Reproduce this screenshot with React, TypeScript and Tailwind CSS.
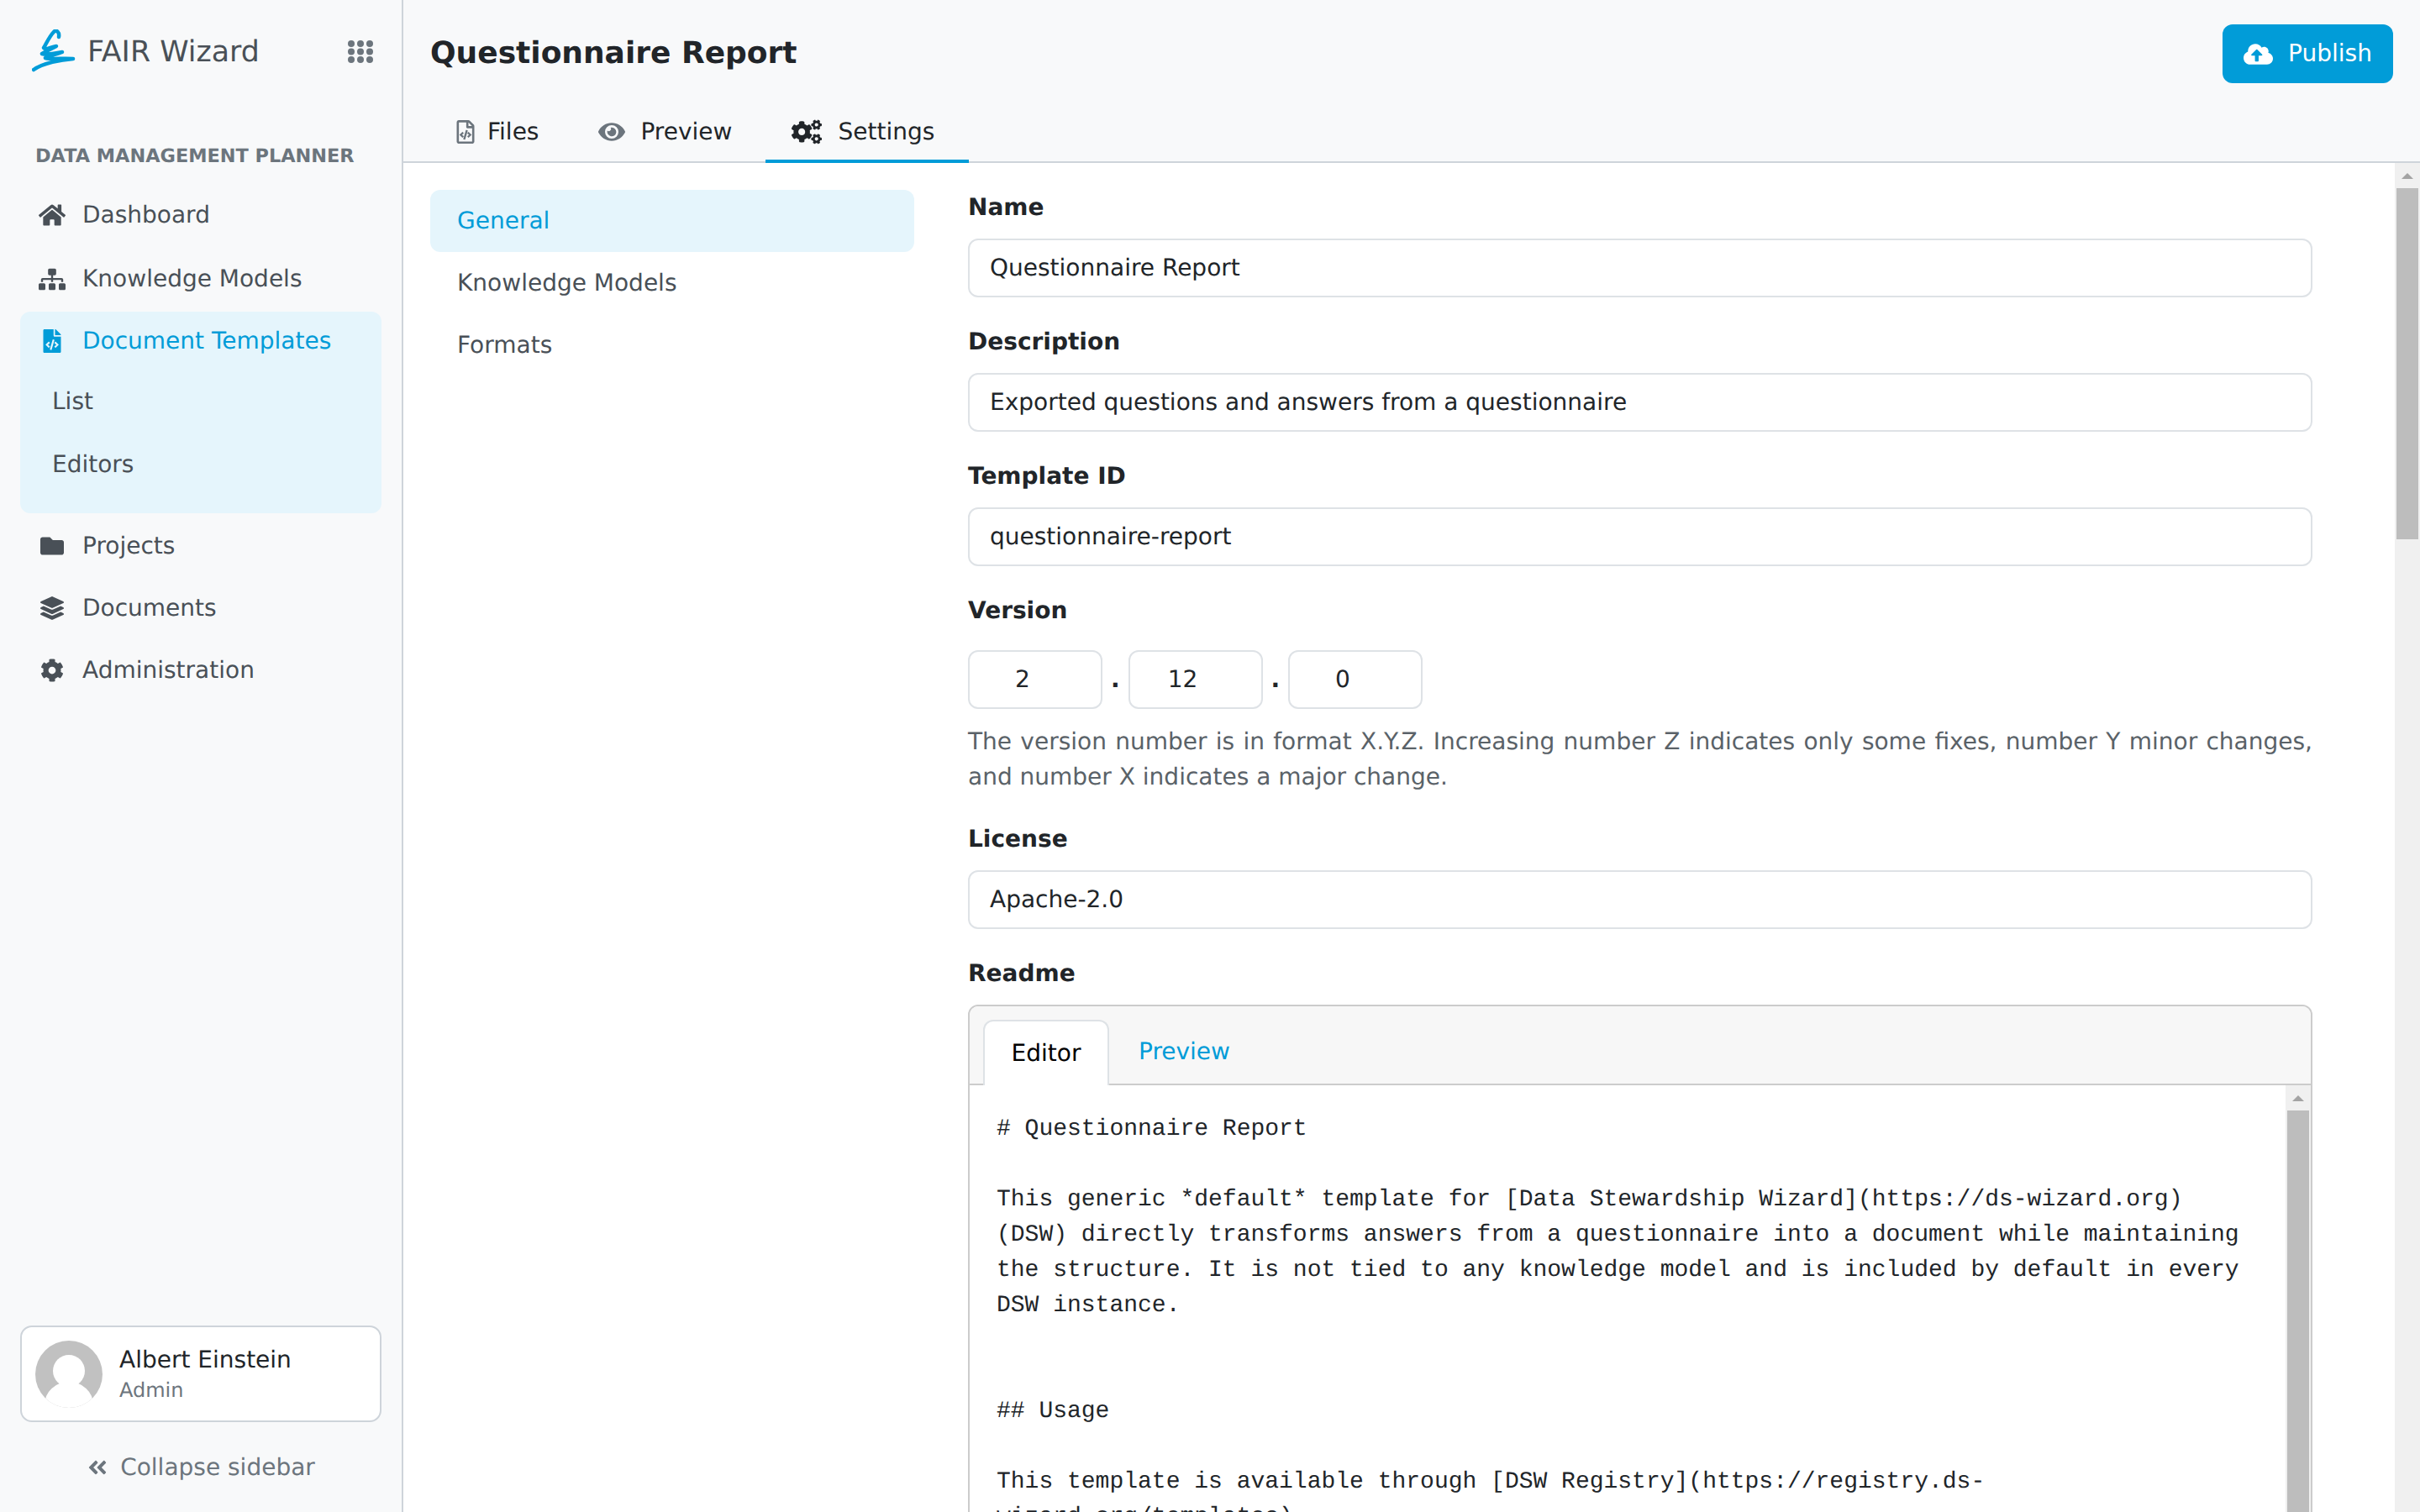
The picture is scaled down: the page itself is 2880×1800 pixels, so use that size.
import {
  FaAngleDoubleLeft,
  FaCloudUploadAlt,
  FaCog,
  FaCogs,
  FaEye,
  FaFileCode,
  FaFolder,
  FaHome,
  FaLayerGroup,
  FaRegFileCode,
  FaSitemap,
} from "react-icons/fa";
import type { ReactNode } from "react";

const README = `# Questionnaire Report

This generic *default* template for [Data Stewardship Wizard](https://ds-wizard.org)
(DSW) directly transforms answers from a questionnaire into a document while maintaining
the structure. It is not tied to any knowledge model and is included by default in every
DSW instance.


## Usage

This template is available through [DSW Registry](https://registry.ds-
wizard.org/templates).`;

const Logo = () => (
  <svg viewBox="9 11 52 52" className="w-[52px] h-[52px] text-[#019cd8]" fill="none">
    <path
      d="M41 20C42 14 38 11 35 14C30 19 26 28 23 33C25 36 31 32 38 31C32 34 26 37 21 40C28 42 37 39 45 38C38 41 30 42 25 45C32 47 46 45 58 46C44 47 22 51 11 59"
      stroke="currentColor"
      strokeWidth="4.5"
      strokeLinecap="round"
      strokeLinejoin="round"
    />
  </svg>
);

const DotsGrid = () => (
  <svg viewBox="0 0 30 27" className="w-[30px] h-[27px] text-[#6c757d]" fill="currentColor">
    {[4, 15, 26].map((cx) =>
      [4, 13.5, 23].map((cy) => <circle key={`${cx}-${cy}`} cx={cx} cy={cy} r="4" />),
    )}
  </svg>
);

const Avatar = () => (
  <svg viewBox="0 0 80 80" className="w-[80px] h-[80px] shrink-0">
    <defs>
      <clipPath id="avatar-clip">
        <circle cx="40" cy="40" r="40" />
      </clipPath>
    </defs>
    <g clipPath="url(#avatar-clip)">
      <rect width="80" height="80" fill="#c1c1c1" />
      <circle cx="40" cy="36" r="19" fill="#fff" />
      <ellipse cx="40" cy="76" rx="29" ry="27" fill="#fff" />
    </g>
  </svg>
);

const SideItem = ({ icon, label }: { icon: ReactNode; label: string }) => (
  <div className="flex items-center h-[74px] pl-[22px] mx-[24px] text-[#495057]">
    <span className="w-[32px] flex justify-center text-[28px]">{icon}</span>
    <span className="ml-[20px]">{label}</span>
  </div>
);

const Scrollbar = ({ thumb }: { thumb: string }) => (
  <div className="w-[30px] shrink-0 bg-[#f0f0f0] flex flex-col items-center">
    <div className="h-[30px] shrink-0 flex items-center justify-center">
      <div className="w-0 h-0 border-x-[7px] border-x-transparent border-b-[7px] border-b-[#a3a3a3]" />
    </div>
    <div className={`w-[26px] bg-[#bdbdbd] ${thumb}`} />
  </div>
);

const Label = ({ children }: { children: ReactNode }) => (
  <div className="h-[42px] mb-[16px] font-bold text-[#212529]">{children}</div>
);

const Field = ({ label, value }: { label: string; value: string }) => (
  <div className="mb-[32px]">
    <Label>{label}</Label>
    <div className="h-[70px] flex items-center px-[24px] bg-white border-2 border-[#dee2e6] rounded-[12px] text-[#212529]">
      {value}
    </div>
  </div>
);

const VersionBox = ({ value }: { value: string }) => (
  <div className="w-[160px] h-[70px] flex items-center justify-center pr-[30px] bg-white border-2 border-[#dee2e6] rounded-[12px] text-[#212529]">
    {value}
  </div>
);

const VersionDot = () => (
  <span className="w-[30.5px] text-center text-[#212529] font-bold">.</span>
);

const App = () => (
  <div className="flex h-[1800px] w-full overflow-hidden bg-white font-['DejaVu_Sans',sans-serif] text-[28px] leading-[42px] [text-rendering:geometricPrecision]">
    <aside className="w-[480px] shrink-0 flex flex-col bg-[#f8f9fa] border-r-2 border-[#ced4da]">
      <div className="flex items-center h-[122px] pl-[38px] pr-[34px]">
        <Logo />
        <span className="ml-[14px] pt-[2px] text-[34.8px] text-[#495057]">FAIR Wizard</span>
        <span className="ml-auto flex">
          <DotsGrid />
        </span>
      </div>
      <div className="mt-[43px] mb-[12px] pl-[42px] h-[42px] text-[22.4px] font-bold uppercase text-[#6c757d]">
        Data Management Planner
      </div>
      <SideItem icon={<FaHome className="text-[32px]" />} label="Dashboard" />
      <div className="mt-[2px]">
        <SideItem icon={<FaSitemap className="text-[35px]" />} label="Knowledge Models" />
      </div>
      <div className="mx-[24px] h-[240px] mt-[2px] mb-[2px] bg-[#e5f5fc] rounded-[12px]">
        <div className="flex items-center h-[70px] pl-[22px] text-[#019cd8]">
          <span className="w-[32px] flex justify-center text-[28px]">
            <FaFileCode />
          </span>
          <span className="ml-[20px]">Document Templates</span>
        </div>
        <div className="flex items-center h-[74px] pl-[38px] text-[#495057]">List</div>
        <div className="flex items-center h-[76px] pl-[38px] text-[#495057]">Editors</div>
      </div>
      <SideItem icon={<FaFolder />} label="Projects" />
      <SideItem icon={<FaLayerGroup />} label="Documents" />
      <SideItem icon={<FaCog />} label="Administration" />
      <div className="mt-auto mx-[24px] h-[115px] flex items-center pl-[16px] bg-white border-2 border-[#ced4da] rounded-[14px]">
        <Avatar />
        <div className="ml-[20px]">
          <div className="text-[#212529] leading-[38px]">Albert Einstein</div>
          <div className="text-[24px] leading-[34px] text-[#6c757d]">Admin</div>
        </div>
      </div>
      <div className="h-[107px] flex items-center justify-center text-[#6c757d]">
        <FaAngleDoubleLeft className="text-[26px]" />
        <span className="ml-[14px]">Collapse sidebar</span>
      </div>
    </aside>

    <main className="flex-1 min-w-0 flex flex-col">
      <header className="h-[194px] shrink-0 flex flex-col bg-[#f8f9fa] border-b-2 border-[#ced4da]">
        <div className="flex items-center justify-between pl-[32px] pr-[32px] pt-[29px]">
          <h1 className="text-[36px] font-bold text-[#212529]">Questionnaire Report</h1>
          <button className="h-[70px] w-[203px] flex items-center justify-center bg-[#019cd8] rounded-[12px] text-white">
            <FaCloudUploadAlt className="text-[35px]" />
            <span className="ml-[18px]">Publish</span>
          </button>
        </div>
        <nav className="flex gap-2 ml-[32px] mt-auto text-[#212529]">
          <div className="flex items-center h-[70px] pl-[28px] pr-[31px] mb-[-2px] border-b-4 border-transparent">
            <FaRegFileCode className="text-[28px] text-[#6c757d]" />
            <span className="ml-[12px]">Files</span>
          </div>
          <div className="flex items-center h-[70px] pl-[32px] pr-[32px] mb-[-2px] border-b-4 border-transparent">
            <FaEye className="text-[32px] text-[#6c757d]" />
            <span className="ml-[18px]">Preview</span>
          </div>
          <div className="flex items-center h-[70px] pl-[31px] pr-[41px] mb-[-2px] border-b-4 border-[#019cd8]">
            <FaCogs className="text-[36px]" />
            <span className="ml-[19px]">Settings</span>
          </div>
        </nav>
      </header>

      <div className="flex-1 min-h-0 flex">
        <div className="flex-1 min-w-0 overflow-hidden flex pl-[32px] pr-[98px] pt-[32px]">
          <div className="w-[576px] shrink-0 text-[#495057]">
            <div className="h-[74px] flex items-center px-[32px] bg-[#e5f5fc] rounded-[12px] text-[#019cd8]">
              General
            </div>
            <div className="h-[74px] flex items-center px-[32px]">Knowledge Models</div>
            <div className="h-[74px] flex items-center px-[32px]">Formats</div>
          </div>
          <div className="ml-[64px] flex-1 min-w-0">
            <Field label="Name" value="Questionnaire Report" />
            <Field label="Description" value="Exported questions and answers from a questionnaire" />
            <Field label="Template ID" value="questionnaire-report" />
            <div className="mb-[32px]">
              <Label>Version</Label>
              <div className="flex items-center mt-[26px]">
                <VersionBox value="2" />
                <VersionDot />
                <VersionBox value="12" />
                <VersionDot />
                <VersionBox value="0" />
              </div>
              <p className="mt-[18px] text-[#5a6268] text-justify">
                The version number is in format X.Y.Z. Increasing number Z indicates only some fixes,
                number Y minor changes, and number X indicates a major change.
              </p>
            </div>
            <Field label="License" value="Apache-2.0" />
            <Label>Readme</Label>
            <div className="mt-[3px] h-[700px] flex flex-col bg-white border-2 border-[#cccccc] rounded-t-[12px] overflow-hidden">
              <div className="h-[94px] shrink-0 flex items-end pl-[16px] bg-[#f7f7f7] border-b-2 border-[#cccccc]">
                <div className="h-[78px] w-[150px] mb-[-2px] flex items-center justify-center bg-white border-2 border-b-0 border-[#dee2e6] rounded-t-[12px] text-black">
                  Editor
                </div>
                <div className="h-[76px] ml-[35px] flex items-center text-[#019cd8]">Preview</div>
              </div>
              <div className="flex-1 min-h-0 flex">
                <pre className="flex-1 min-w-0 pt-[32px] pl-[32px] font-['Liberation_Mono',monospace] text-[28px] leading-[42px] text-[#212529]">
                  {README}
                </pre>
                <Scrollbar thumb="flex-1" />
              </div>
            </div>
          </div>
        </div>
        <Scrollbar thumb="h-[418px]" />
      </div>
    </main>
  </div>
);

export default App;
